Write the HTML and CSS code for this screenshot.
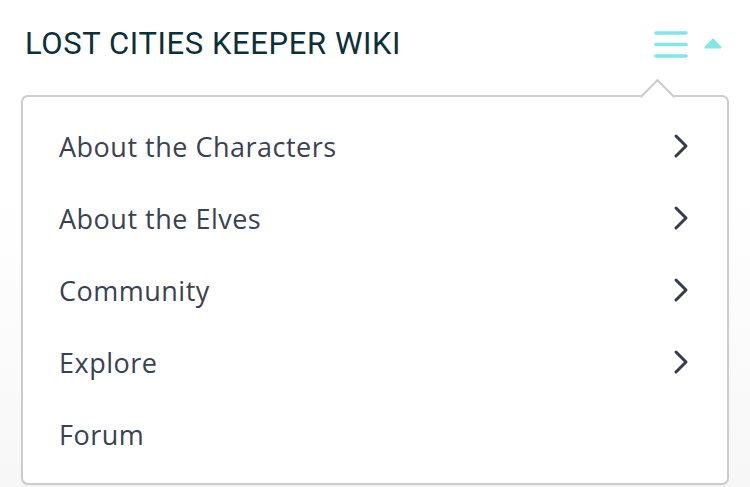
FILE: index.html
```html
<!DOCTYPE html>
<html>
<head>
<meta charset="utf-8">
<link rel="stylesheet" href="styles.css">
</head>
<body>
<header class="top">
  <h1 class="title">LOST CITIES KEEPER WIKI</h1>
  <div class="controls">
    <svg class="burger" width="34" height="28" viewBox="0 0 34 28">
      <g stroke="#7fe8e6" stroke-width="3.6" stroke-linecap="round">
        <line x1="2" y1="3" x2="32" y2="3"/>
        <line x1="2" y1="14.5" x2="32" y2="14.5"/>
        <line x1="2" y1="26" x2="32" y2="26"/>
      </g>
    </svg>
    <svg class="caret" width="18" height="11" viewBox="0 0 18 11">
      <path d="M9 1.5 L16.5 9.5 L1.5 9.5 Z" fill="#7fe8e6" stroke="#7fe8e6" stroke-width="2" stroke-linejoin="round"/>
    </svg>
  </div>
</header>
<nav class="menu">
  <ul class="items">
    <li class="item"><span>About the Characters</span><svg class="chev" width="16" height="26" viewBox="0 0 16 26"><path d="M3 3 L13 13 L3 23" fill="none" stroke="#343b4a" stroke-width="3" stroke-linecap="round" stroke-linejoin="round"/></svg></li>
    <li class="item"><span>About the Elves</span><svg class="chev" width="16" height="26" viewBox="0 0 16 26"><path d="M3 3 L13 13 L3 23" fill="none" stroke="#343b4a" stroke-width="3" stroke-linecap="round" stroke-linejoin="round"/></svg></li>
    <li class="item"><span>Community</span><svg class="chev" width="16" height="26" viewBox="0 0 16 26"><path d="M3 3 L13 13 L3 23" fill="none" stroke="#343b4a" stroke-width="3" stroke-linecap="round" stroke-linejoin="round"/></svg></li>
    <li class="item"><span>Explore</span><svg class="chev" width="16" height="26" viewBox="0 0 16 26"><path d="M3 3 L13 13 L3 23" fill="none" stroke="#343b4a" stroke-width="3" stroke-linecap="round" stroke-linejoin="round"/></svg></li>
    <li class="item"><span>Forum</span></li>
  </ul>
</nav>
</body>
</html>
```
FILE: styles.css
```css
html, body {
  margin: 0;
  padding: 0;
}
body {
  width: 750px;
  height: 487px;
  overflow: hidden;
  background: linear-gradient(#ffffff 0%, #ffffff 40%, #f7f7f7 100%);
  font-family: "Open Sans", sans-serif;
}
.top {
  height: 95px;
  display: flex;
  align-items: flex-start;
  justify-content: space-between;
  padding: 0 28px 0 25px;
  box-sizing: border-box;
  position: relative;
}
.title {
  margin: 26px 0 0 0;
  font-family: "Roboto", sans-serif;
  font-weight: 400;
  font-size: 31px;
  line-height: 36px;
  color: #0c2f38;
  letter-spacing: 0.6px;
}
.controls {
  margin-top: 30px;
  display: flex;
  align-items: flex-start;
  gap: 16px;
}
.burger {
  display: block;
}
.caret {
  display: block;
  margin-top: 8px;
}
.menu {
  margin: 0 21px;
  height: 390px;
  box-sizing: border-box;
  border: 2px solid #cccccc;
  border-radius: 7px;
  background: #fff;
  position: relative;
  box-shadow: 0 1px 3px rgba(0,0,0,0.04);
}
.menu::before {
  content: "";
  position: absolute;
  top: -13px;
  right: 57px;
  width: 23px;
  height: 23px;
  background: #fff;
  border-top: 2px solid #cccccc;
  border-left: 2px solid #cccccc;
  transform: rotate(45deg);
}
.items {
  list-style: none;
  margin: 0;
  padding: 13px 38px 0 36px;
}
.item {
  height: 72px;
  display: flex;
  align-items: center;
  justify-content: space-between;
  font-size: 27px;
  letter-spacing: 0.5px;
  color: #3a4252;
}
.chev {
  display: block;
}
```
